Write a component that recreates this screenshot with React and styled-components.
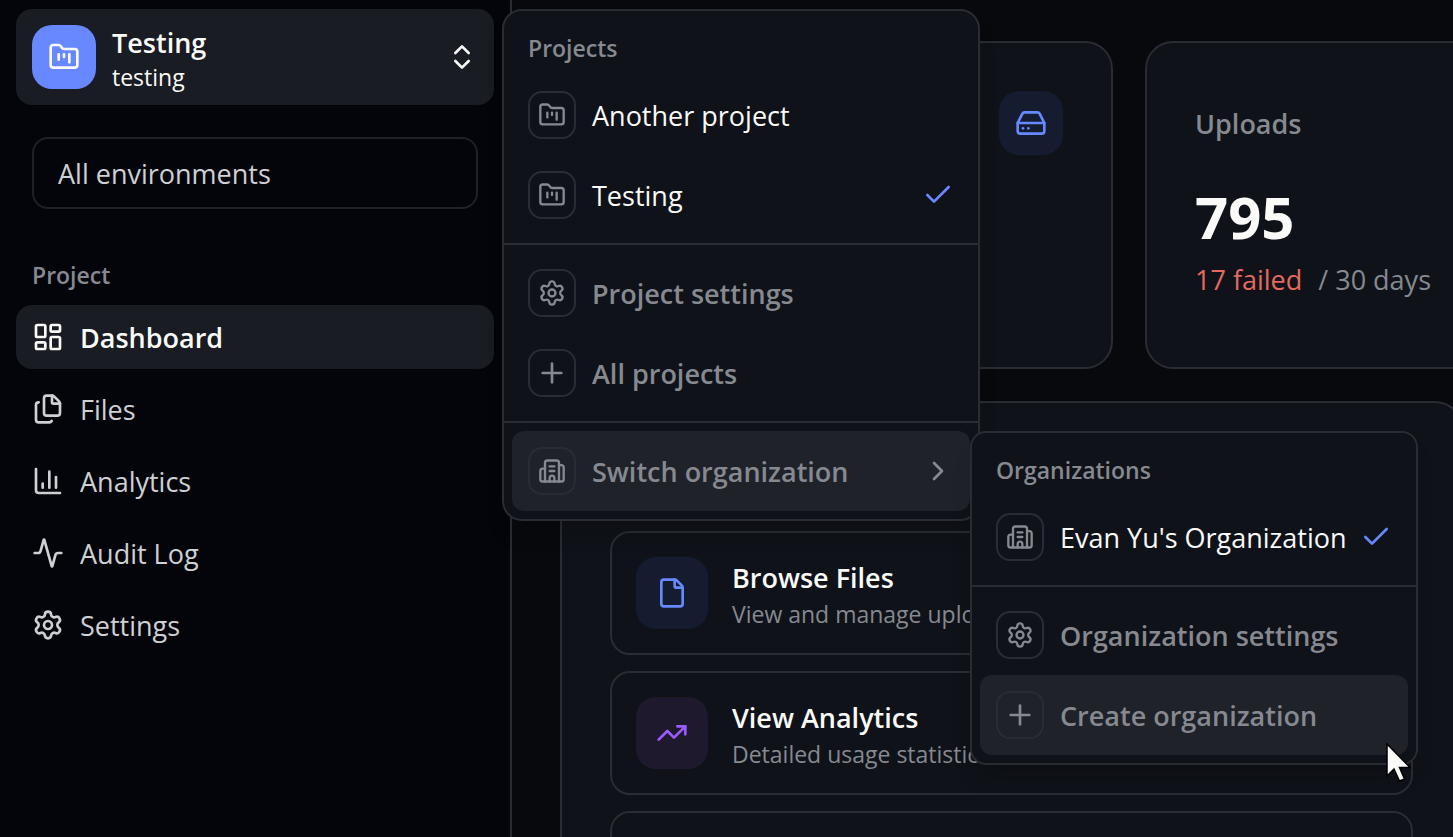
import React, { useState } from 'react';
import styled, { createGlobalStyle } from 'styled-components';
import {
  Activity,
  Building2,
  ChartColumn,
  Check,
  ChevronRight,
  ChevronsUpDown,
  File,
  Files,
  FolderKanban,
  HardDrive,
  LayoutDashboard,
  Plus,
  Settings,
  TrendingUp
} from 'lucide-react';

const GlobalStyle = createGlobalStyle`
  :root {
    --sidebar-bg: #03050a;
    --page-bg: #08090d;
    --surface: #0f1218;
    --highlight: #191c22;
    --menu-highlight: #1f2229;
    --border: #292c32;
    --border-soft: #1f2126;
    --text: #fafaf8;
    --text-soft: #cfd0d4;
    --text-muted: #868990;
    --accent: #6888ff;
    --font-size-sm: 23px;
    --font-size-md: 27px;
    --font-size-xl: 58px;
  }

  * {
    box-sizing: border-box;
  }

  body {
    margin: 0;
    background: var(--page-bg);
    color: var(--text);
    font-family: 'Open Sans', 'Noto Sans', sans-serif;
    font-size: var(--font-size-md);
  }

  button, select {
    font: inherit;
    color: inherit;
  }
`;

const Shell = styled.div`
  display: flex;
  height: 100vh;
  overflow: hidden;
`;

// Sidebar
const Sidebar = styled.aside`
  flex: 0 0 512px;
  display: flex;
  flex-direction: column;
  padding: 9px 16px 16px;
  background: var(--sidebar-bg);
  border-right: 2px solid var(--border);
`;

const SwitcherWrap = styled.div`
  position: relative;
  z-index: 10;
`;

const Switcher = styled.button`
  display: flex;
  align-items: center;
  gap: 16px;
  width: 100%;
  height: 96px;
  padding: 0 16px;
  border: none;
  border-radius: 16px;
  background: var(--highlight);
  text-align: left;
  cursor: pointer;
`;

const SwitcherIcon = styled.span`
  display: flex;
  align-items: center;
  justify-content: center;
  width: 64px;
  height: 64px;
  border-radius: 20px;
  background: var(--accent);
`;

const SwitcherText = styled.span`
  flex: 1;
  display: flex;
  flex-direction: column;
  padding-top: 4px;
`;

const SwitcherName = styled.span`
  font-weight: 600;
  line-height: 36px;
`;

const SwitcherSlug = styled.span`
  font-size: var(--font-size-sm);
  line-height: 32px;
`;

const EnvironmentSelect = styled.select`
  appearance: none;
  height: 72px;
  margin: 32px 16px;
  padding: 0 24px;
  border: 2px solid var(--border-soft);
  border-radius: 16px;
  background: transparent;
  color: var(--text-soft);
`;

const NavLabel = styled.h2`
  margin: 0;
  padding: 18px 16px 14px;
  color: var(--text-muted);
  font-size: var(--font-size-sm);
  font-weight: 600;
  line-height: 32px;
`;

const Nav = styled.nav`
  display: flex;
  flex-direction: column;
  gap: 8px;
`;

const NavItem = styled.a`
  display: flex;
  align-items: center;
  gap: 16px;
  height: 64px;
  padding: 0 16px;
  border-radius: 16px;
  background: ${props => props.$active ? 'var(--highlight)' : 'transparent'};
  color: ${props => props.$active ? 'var(--text)' : 'var(--text-soft)'};
  font-weight: ${props => props.$active ? 600 : 400};
  text-decoration: none;
`;

// Dropdown menus
const Menu = styled.div`
  position: absolute;
  top: 0;
  left: ${props => props.$nested ? '100%' : 'calc(100% + 8px)'};
  z-index: 20;
  width: ${props => props.$nested ? '448px' : '478px'};
  border: 2px solid var(--border);
  border-radius: ${props => props.$nested ? '16px' : '20px'};
  background: var(--surface);
  box-shadow: 0 16px 24px -8px rgba(0, 0, 0, 0.2);
`;

const MenuGroup = styled.div`
  padding: 8px;

  & + & {
    border-top: 2px solid var(--border);
  }
`;

const MenuLabel = styled.div`
  height: 56px;
  padding: 13px 16px 11px;
  color: var(--text-muted);
  font-size: var(--font-size-sm);
  font-weight: 600;
  line-height: 32px;
`;

const MenuItemWrap = styled.div`
  position: relative;
`;

const MenuItem = styled.button`
  display: flex;
  align-items: center;
  gap: 16px;
  width: 100%;
  height: 80px;
  padding: 0 16px;
  border: none;
  border-radius: 12px;
  background: ${props => props.$highlighted ? 'var(--menu-highlight)' : 'transparent'};
  color: ${props => props.$muted ? 'var(--text-muted)' : 'var(--text)'};
  font-weight: ${props => props.$muted ? 600 : 400};
  text-align: left;
  white-space: nowrap;
  cursor: pointer;
`;

const MenuBadge = styled.span`
  display: flex;
  align-items: center;
  justify-content: center;
  flex: 0 0 48px;
  height: 48px;
  border: 2px solid var(--border);
  border-radius: 14px;
  color: var(--text-muted);
`;

const MenuText = styled.span`
  flex: 1;
  min-width: 0;
`;

const Checkmark = styled(Check)`
  flex-shrink: 0;
  color: var(--accent);
`;

const Pointer = styled.svg`
  position: absolute;
  right: -4px;
  bottom: -28px;
  width: 26px;
  height: 40px;
  pointer-events: none;
`;

// Page content
const Main = styled.main`
  flex: 1;
  min-width: 0;
  display: flex;
  flex-direction: column;
  gap: 32px;
  padding: 41px 0 0 48px;
  overflow: hidden;
`;

const StatGrid = styled.div`
  display: grid;
  grid-auto-flow: column;
  grid-auto-columns: minmax(553px, 1fr);
  gap: 32px;
`;

const StatCard = styled.section`
  height: 328px;
  padding: 48px;
  border: 2px solid var(--border);
  border-radius: 28px;
  background: var(--surface);
`;

const StatHeader = styled.header`
  display: flex;
  align-items: center;
  justify-content: space-between;
  height: 64px;
  margin-bottom: 26px;
`;

const StatTitle = styled.h3`
  margin: 0;
  color: var(--text-muted);
  font-size: var(--font-size-md);
  font-weight: 600;
`;

const StatValue = styled.div`
  font-size: var(--font-size-xl);
  font-weight: 700;
  line-height: 72px;
`;

const StatNote = styled.div`
  display: flex;
  gap: 16px;
  color: var(--text-muted);
  line-height: 54px;
`;

const Failed = styled.span`
  color: #e5695e;
`;

const IconTile = styled.span`
  display: flex;
  align-items: center;
  justify-content: center;
  flex: 0 0 ${props => props.$size};
  height: ${props => props.$size};
  margin-left: ${props => props.$end ? 'auto' : '0'};
  border-radius: 20px;
  background: ${props => props.$tone === 'purple' ? '#1e192d' : '#161c30'};
  color: ${props => props.$tone === 'purple' ? '#9b5cff' : 'var(--accent)'};
`;

const ActionsPanel = styled.section`
  display: flex;
  flex-direction: column;
  gap: 16px;
  width: 100%;
  min-width: 903px;
  padding: 128px 48px 48px;
  border: 2px solid var(--border);
  border-radius: 28px;
  background: var(--surface);
`;

const ActionCard = styled.a`
  display: flex;
  align-items: center;
  gap: 24px;
  min-height: 124px;
  padding: 0 24px;
  border: 2px solid var(--border);
  border-radius: 20px;
  color: var(--text);
  text-decoration: none;
`;

const ActionText = styled.div`
  padding-top: 6px;
`;

const ActionTitle = styled.div`
  font-weight: 600;
  line-height: 36px;
`;

const ActionDescription = styled.div`
  color: var(--text-muted);
  font-size: var(--font-size-sm);
  line-height: 36px;
`;

const navItems = [
  { label: 'Dashboard', icon: LayoutDashboard },
  { label: 'Files', icon: Files },
  { label: 'Analytics', icon: ChartColumn },
  { label: 'Audit Log', icon: Activity },
  { label: 'Settings', icon: Settings }
];

const projects = ['Another project', 'Testing'];

const actions = [
  { title: 'Browse Files', description: 'View and manage uploaded files', icon: File, tone: 'blue' },
  { title: 'View Analytics', description: 'Detailed usage statistics', icon: TrendingUp, tone: 'purple' }
];

const Entry = ({ icon: Icon, iconSize = 28, label, muted, highlighted, checked, submenu, onClick }) => (
  <MenuItem type="button" role="menuitem" $muted={muted} $highlighted={highlighted} onClick={onClick}>
    <MenuBadge>
      <Icon size={iconSize} />
    </MenuBadge>
    <MenuText>{label}</MenuText>
    {checked && <Checkmark size={32} />}
    {submenu && <ChevronRight size={32} />}
  </MenuItem>
);

const OrganizationMenu = () => (
  <Menu role="menu" $nested>
    <MenuGroup>
      <MenuLabel>Organizations</MenuLabel>
      <Entry icon={Building2} label="Evan Yu's Organization" checked />
    </MenuGroup>
    <MenuGroup>
      <Entry icon={Settings} label="Organization settings" muted />
      <MenuItemWrap>
        <Entry icon={Plus} iconSize={32} label="Create organization" muted highlighted />
        <Pointer viewBox="0 0 26 40" aria-hidden="true">
          <path
            d="M1 1 V33 L8 26 L13.5 38 L18.5 36 L13.5 24.5 H24 Z"
            fill="#fafaf8"
            stroke="#000"
            strokeWidth="1.5"
          />
        </Pointer>
      </MenuItemWrap>
    </MenuGroup>
  </Menu>
);

const ProjectMenu = ({ current, onSelect }) => (
  <Menu role="menu">
    <MenuGroup>
      <MenuLabel>Projects</MenuLabel>
      {projects.map(project => (
        <Entry
          key={project}
          icon={FolderKanban}
          label={project}
          checked={project === current}
          onClick={() => onSelect(project)}
        />
      ))}
    </MenuGroup>
    <MenuGroup>
      <Entry icon={Settings} label="Project settings" muted />
      <Entry icon={Plus} iconSize={32} label="All projects" muted />
    </MenuGroup>
    <MenuGroup>
      <MenuItemWrap>
        <Entry icon={Building2} label="Switch organization" muted highlighted submenu />
        <OrganizationMenu />
      </MenuItemWrap>
    </MenuGroup>
  </Menu>
);

const App = () => {
  const [project, setProject] = useState('Testing');
  const [open, setOpen] = useState(true);

  return (
    <Shell>
      <GlobalStyle />
      <Sidebar>
        <SwitcherWrap>
          <Switcher type="button" aria-expanded={open} onClick={() => setOpen(!open)}>
            <SwitcherIcon>
              <FolderKanban size={32} />
            </SwitcherIcon>
            <SwitcherText>
              <SwitcherName>{project}</SwitcherName>
              <SwitcherSlug>{project.toLowerCase().replace(' ', '-')}</SwitcherSlug>
            </SwitcherText>
            <ChevronsUpDown size={32} />
          </Switcher>
          {open && <ProjectMenu current={project} onSelect={setProject} />}
        </SwitcherWrap>

        <EnvironmentSelect aria-label="Environment">
          <option>All environments</option>
        </EnvironmentSelect>

        <NavLabel>Project</NavLabel>
        <Nav>
          {navItems.map(({ label, icon: Icon }) => (
            <NavItem key={label} href="#" $active={label === 'Dashboard'}>
              <Icon size={32} />
              {label}
            </NavItem>
          ))}
        </Nav>
      </Sidebar>

      <Main>
        <StatGrid>
          <StatCard>
            <StatHeader>
              <IconTile $size="64px" $end>
                <HardDrive size={32} />
              </IconTile>
            </StatHeader>
          </StatCard>
          <StatCard>
            <StatHeader>
              <StatTitle>Uploads</StatTitle>
            </StatHeader>
            <StatValue>795</StatValue>
            <StatNote>
              <Failed>17 failed</Failed>
              <span>/ 30 days</span>
            </StatNote>
          </StatCard>
        </StatGrid>

        <ActionsPanel>
          {actions.map(({ title, description, icon: Icon, tone }) => (
            <ActionCard key={title} href="#">
              <IconTile $size="72px" $tone={tone}>
                <Icon size={32} />
              </IconTile>
              <ActionText>
                <ActionTitle>{title}</ActionTitle>
                <ActionDescription>{description}</ActionDescription>
              </ActionText>
            </ActionCard>
          ))}
          <ActionCard href="#" aria-label="More actions" />
        </ActionsPanel>
      </Main>
    </Shell>
  );
};

export default App;
